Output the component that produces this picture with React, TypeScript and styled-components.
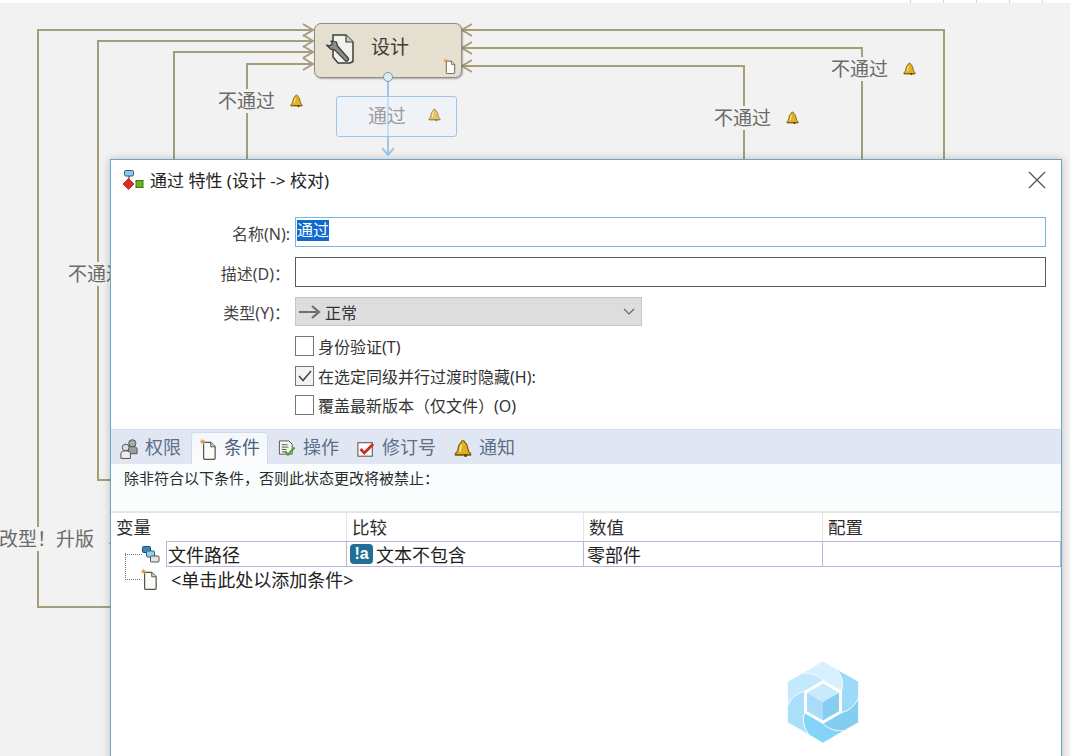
import styled, { createGlobalStyle } from 'styled-components';

const GlobalStyle = createGlobalStyle`
  html, body {
    margin: 0;
    padding: 0;
    background: #f2f2f2;
    overflow: hidden;
    font-family: "Noto Sans", "Noto Sans CJK SC", sans-serif;
  }
`;

const bellFill = '#e3b021';

function BellIcon({ size = 13 }: { size?: number }) {
  return (
    <svg width={size} height={size + 1} viewBox="0 0 14 15">
      <path d="M7 1.200c1 0 1.400.7 1.500 1.600C10.400 3.800 10.600 6 11 8.500c.2 1.400 1 2.300 2 3v1.300H1v-1.300c1-.7 1.800-1.600 2-3C3.400 6 3.600 3.800 5.500 2.800 5.600 1.900 6 1.200 7 1.200z" fill={bellFill} stroke="#7d6010" strokeWidth="1" />
      <path d="M5.800 4.500C5 6 5 8 4.600 10" stroke="#fff3b8" strokeWidth="1" fill="none" />
      <path d="M1.500 11.800h11v1H1.500z" fill="#7d6010" />
      <circle cx="9" cy="13" r="1.200" fill="#5a4708" />
    </svg>
  );
}

function DocIcon({ width = 16, height = 20, star = true }: { width?: number; height?: number; star?: boolean }) {
  return (
    <svg width={width} height={height} viewBox="0 0 16 20">
      <path d="M4 4h6.500L14.500 8v10.500c0 .6-.4 1-1 1H5c-.6 0-1-.4-1-1z" fill="#fbfbf8" stroke="#55554f" strokeWidth="1.100" />
      <path d="M10.500 4v4h4" fill="#d9d9d4" stroke="#55554f" strokeWidth="0.900" />
      {star && <path d="M3 .5l.6 1.700L5.300 1.400 4.400 3l1.600.8-1.800.3L3.800 6 3 4.300 1.400 5.500l.5-1.700L.3 3l1.800-.4L1.700 1l1.100.9z" fill="#e59a3c" />}
    </svg>
  );
}

function ToolDocIcon() {
  return (
    <svg width="30" height="32" viewBox="0 0 30 32">
      <path d="M8 2h13l7 7v19.500L25 30H13L8 24z" fill="#f1f1ee" stroke="#3e3e3a" strokeWidth="1.500" />
      <path d="M21 2v7h7" fill="#c9c9c5" stroke="#3e3e3a" strokeWidth="1.200" />
      <path d="M6 8l5.500 1 1 4 11 12.500c.8 1.200-1.600 3.400-2.800 2.600L9.600 16.800l-4-.6L1.500 12l3.400.8 2.400-1.800z" fill="#8d8d8a" stroke="#3a3a38" strokeWidth="1.200" strokeLinejoin="round" />
    </svg>
  );
}

function FlowIcon() {
  return (
    <svg width="22" height="20" viewBox="0 0 22 20">
      <rect x="2.500" y="0.500" width="9" height="5.500" rx="1.200" fill="#8fcbe6" stroke="#2d5f7e" />
      <path d="M7 6v4" stroke="#333" strokeWidth="1" />
      <path d="M6.500 8.500l5.500 5.500-5.500 5.500L1 14z" fill="#df2a22" stroke="#8c1410" strokeWidth="0.700" />
      <rect x="14" y="10.500" width="7" height="7" fill="#6db31e" stroke="#3e7510" />
    </svg>
  );
}

function PeopleIcon() {
  return (
    <svg width="18" height="22" viewBox="0 0 19 22">
      <circle cx="13" cy="5" r="3.800" fill="#a9a9a9" stroke="#4c4c4c" />
      <path d="M8.500 10.500c0-1.300 1.500-2 4.500-2s5 .7 5 2.200V16H8.500z" fill="#9d9d9d" stroke="#4c4c4c" />
      <circle cx="6" cy="9.500" r="3.600" fill="#dedede" stroke="#4c4c4c" />
      <path d="M1 15.500c0-1.700 2-2.500 5-2.500s5 .8 5 2.500V21H1z" fill="#ececec" stroke="#4c4c4c" />
    </svg>
  );
}

function ScriptIcon() {
  return (
    <svg width="18" height="19" viewBox="0 0 19 20">
      <path d="M1.500 2h10L15 5.500V16H1.500z" fill="#f5f5f2" stroke="#55554f" />
      <path d="M4 6h6M4 8.500h7M4 11h5M4 13.500h4" stroke="#55554f" strokeWidth="1" />
      <path d="M7.500 13l3 3.500 7-7.500" fill="none" stroke="#4aa52b" strokeWidth="2.400" />
    </svg>
  );
}

function CheckedBoxIcon() {
  return (
    <svg width="18" height="18" viewBox="0 0 20 20">
      <rect x="1" y="3" width="16" height="15" fill="#fbfbfb" stroke="#5c5c5c" strokeWidth="1.200" />
      <path d="M4 10l4 4.500L18 4.500" fill="none" stroke="#cf2b22" strokeWidth="3" />
    </svg>
  );
}

function VariableIcon() {
  return (
    <svg width="18" height="17" viewBox="0 0 18 17">
      <rect x="0.500" y="0.500" width="8" height="6" rx="1" fill="#3d87b8" stroke="#1d4a6c" />
      <rect x="4.500" y="5" width="8" height="6" rx="1" fill="#8fd0ee" stroke="#2a678c" />
      <rect x="8.500" y="10" width="8.500" height="6" rx="1" fill="#e4e4e0" stroke="#55554f" />
    </svg>
  );
}

function HexLogo() {
  const blades = [
    { angle: 0, fill: '#d8f0fd' },
    { angle: 60, fill: '#9bdbf9' },
    { angle: 120, fill: '#85cdf0' },
    { angle: 180, fill: '#84d4fa' },
    { angle: 240, fill: '#a9dff9' },
    { angle: 300, fill: '#c4e9fc' },
  ];
  return (
    <svg width="72" height="82" viewBox="-36 -41 72 82">
      {blades.map((b) => (
        <path
          key={b.angle}
          transform={`rotate(${b.angle})`}
          d="M0-41L14.400-32.500Q22-22 18.600-10.700L0-21.500Q-8-30-21-28.700Z"
          fill={b.fill}
          stroke="#fff"
          strokeWidth="0.600"
        />
      ))}
      <path d="M0-21.500L18.600-10.700V10.700L0 21.500-18.600 10.700V-10.700Z" fill="#fff" />
      <path d="M0-18.500L16-9.200 0 0-16-9.200Z" fill="#c7ebfd" />
      <path d="M-16-9.200L0 0V18.500L-16 9.200Z" fill="#a8dcf8" />
      <path d="M16-9.200L0 0V18.500L16 9.200Z" fill="#86cef0" />
    </svg>
  );
}

function Connectors() {
  const left = [
    '110,607 38,607 38,30 312,30',
    '110,480 98,480 98,41 312,41',
    '174,160 174,52 312,52',
    '247,160 247,64 312,64',
  ];
  const right = [
    '944,160 944,30 463,30',
    '862,160 862,48 463,48',
    '744,160 744,66 463,66',
  ];
  return (
    <Lines width="1070" height="756">
      {left.map((p) => <polyline key={p} points={p} />)}
      {right.map((p) => <polyline key={p} points={p} />)}
      {[30, 41, 52, 64].map((y) => (
        <polyline key={y} points={`303,${y - 6} 313,${y} 303,${y + 6}`} />
      ))}
      {[30, 48, 66].map((y) => (
        <polyline key={y} points={`472,${y - 6} 462,${y} 472,${y + 6}`} />
      ))}
    </Lines>
  );
}

const tabs = [
  { label: '权限', icon: <PeopleIcon /> },
  { label: '条件', icon: <DocIcon width={18} height={22} />, active: true },
  { label: '操作', icon: <ScriptIcon /> },
  { label: '修订号', icon: <CheckedBoxIcon /> },
  { label: '通知', icon: <BellIcon size={18} /> },
];

export default function App() {
  return (
    <Canvas>
      <GlobalStyle />
      <TopStrip>
        <RulerCell /><RulerCell /><RulerCell /><RulerCell /><RulerCell />
      </TopStrip>

      <Connectors />

      <FlowLabel $x={218} $y={89}>不通过<BellIcon /></FlowLabel>
      <FlowLabel $x={714} $y={106}>不通过<BellIcon /></FlowLabel>
      <FlowLabel $x={831} $y={57}>不通过<BellIcon /></FlowLabel>
      <FlowLabel $x={68} $y={262}>不通过<BellIcon /></FlowLabel>
      <FlowLabel $x={-1} $y={527}>改型！升版<BellIcon /></FlowLabel>

      <StateNode>
        <ToolDocIcon />
        <NodeName>设计</NodeName>
        <NodeBadge><DocIcon width={13} height={16} /></NodeBadge>
      </StateNode>

      <SelectedLink>
        <svg width="12" height="84" viewBox="0 0 12 84">
          <path d="M6 5V83" stroke="#9cc6ea" strokeWidth="2" />
          <path d="M0 76l6 7 6-7" stroke="#9cc6ea" strokeWidth="2" fill="none" />
          <circle cx="6" cy="5" r="4.500" fill="#d8ecf6" stroke="#7a9ab0" />
        </svg>
      </SelectedLink>
      <SelectedLabel>通过<BellIcon /></SelectedLabel>

      <Dialog>
        <TitleBar>
          <FlowIcon />
          <Title>通过 特性 (设计 -&gt; 校对)</Title>
          <CloseButton>
            <svg width="18" height="18" viewBox="0 0 18 18">
              <path d="M1 1l16 16M17 1L1 17" stroke="#555" strokeWidth="1.300" />
            </svg>
          </CloseButton>
        </TitleBar>

        <Form>
          <FieldLabel>名称(N):</FieldLabel>
          <TextField $focused><Selection>通过</Selection></TextField>
          <FieldLabel>描述(D)：</FieldLabel>
          <TextField />
          <FieldLabel>类型(Y)：</FieldLabel>
          <SelectBox>
            <svg width="22" height="14" viewBox="0 0 22 14">
              <path d="M0 7h19M13 1l7 6-7 6" stroke="#6f6f6f" strokeWidth="2.200" fill="none" />
            </svg>
            <SelectText>正常</SelectText>
            <svg width="12" height="7" viewBox="0 0 12 7">
              <path d="M1 1l5 5 5-5" stroke="#666" strokeWidth="1.200" fill="none" />
            </svg>
          </SelectBox>
          <CheckRows>
            <CheckRow><CheckBox />身份验证(T)</CheckRow>
            <CheckRow>
              <CheckBox $checked>
                <svg width="14" height="12" viewBox="0 0 14 12">
                  <path d="M1 6l4 4.500L13 1" stroke="#444" strokeWidth="1.500" fill="none" />
                </svg>
              </CheckBox>
              在选定同级并行过渡时隐藏(H):
            </CheckRow>
            <CheckRow><CheckBox />覆盖最新版本（仅文件）(O)</CheckRow>
          </CheckRows>
        </Form>

        <TabBar>
          {tabs.map((t) => (
            <Tab key={t.label} $active={t.active}>
              {t.icon}
              <TabText>{t.label}</TabText>
            </Tab>
          ))}
        </TabBar>

        <InfoPanel>除非符合以下条件，否则此状态更改将被禁止：</InfoPanel>

        <HeaderRow>
          <HeaderCell>变量</HeaderCell>
          <HeaderCell>比较</HeaderCell>
          <HeaderCell>数值</HeaderCell>
          <HeaderCell>配置</HeaderCell>
        </HeaderRow>

        <ConditionRow>
          <TreeCell>
            <TreeElbow $tall />
            <VariableIcon />
            <CellBox>文件路径</CellBox>
          </TreeCell>
          <CellBox>
            <CompareBadge>!a</CompareBadge>
            文本不包含
          </CellBox>
          <CellBox>零部件</CellBox>
          <CellBox />
        </ConditionRow>

        <AddRow>
          <TreeElbow />
          <DocIcon width={18} height={22} />
          <AddText>&lt;单击此处以添加条件&gt;</AddText>
        </AddRow>
      </Dialog>

      <Watermark><HexLogo /></Watermark>
    </Canvas>
  );
}

const Canvas = styled.div`
  position: relative;
  width: 1070px;
  height: 756px;
  overflow: hidden;
  background: #f2f2f2;
`;

const TopStrip = styled.div`
  display: flex;
  height: 3px;
  padding-left: 910px;
  background: #fff;
`;

const RulerCell = styled.div`
  flex: none;
  width: 32px;
  border-left: 1px solid #d8d8d8;
`;

const Lines = styled.svg`
  position: absolute;
  left: 0;
  top: 0;
  fill: none;
  stroke: #a59e7c;
  stroke-width: 2;
`;

const FlowLabel = styled.div<{ $x: number; $y: number }>`
  position: absolute;
  left: ${(p) => p.$x}px;
  top: ${(p) => p.$y}px;
  display: flex;
  align-items: center;
  gap: 15px;
  height: 24px;
  font-size: 19px;
  line-height: 24px;
  color: #6a6a66;
  background: #f2f2f2;
  white-space: nowrap;
`;

const StateNode = styled.div`
  position: absolute;
  left: 314px;
  top: 23px;
  box-sizing: border-box;
  width: 148px;
  height: 55px;
  display: flex;
  align-items: center;
  padding: 0 0 4px 10px;
  gap: 16px;
  background: #e4dfce;
  border: 1px solid #8f8d82;
  border-radius: 7px;
  box-shadow: 1px 1px 2px rgba(0, 0, 0, 0.3);
`;

const NodeName = styled.span`
  margin-bottom: 5px;
  font-size: 19px;
  color: #3c3c38;
`;

const NodeBadge = styled.span`
  position: absolute;
  right: 5px;
  bottom: 3px;
  display: flex;
`;

const SelectedLink = styled.div`
  position: absolute;
  left: 382px;
  top: 72px;
  display: flex;
`;

const SelectedLabel = styled.div`
  position: absolute;
  left: 336px;
  top: 96px;
  box-sizing: border-box;
  width: 121px;
  height: 41px;
  display: flex;
  align-items: center;
  padding: 0 0 4px 31px;
  gap: 22px;
  font-size: 19px;
  color: #9c9c9c;
  background: rgba(236, 244, 252, 0.55);
  border: 1px solid #a3c5e4;
  border-radius: 3px;

  svg {
    opacity: 0.7;
  }
`;

const Dialog = styled.section`
  position: absolute;
  left: 110px;
  top: 159px;
  box-sizing: border-box;
  width: 952px;
  height: 640px;
  display: flex;
  flex-direction: column;
  background: #fff;
  border: 1px solid #6ba5cc;
  box-shadow: 0 0 8px rgba(0, 0, 0, 0.22);
`;

const TitleBar = styled.header`
  display: flex;
  align-items: center;
  box-sizing: border-box;
  height: 41px;
  padding: 0 15px 2px 11px;
  gap: 6px;
`;

const Title = styled.h1`
  flex: 1;
  margin: 0;
  font-size: 17px;
  font-weight: 400;
  color: #222;
`;

const CloseButton = styled.div`
  display: flex;
`;

const Form = styled.div`
  display: grid;
  grid-template-columns: 179px 751px;
  column-gap: 5px;
  row-gap: 10px;
  align-items: center;
  padding-top: 16px;
`;

const FieldLabel = styled.label`
  padding-top: 3px;
  font-size: 16px;
  line-height: 22px;
  color: #444;
  text-align: right;
`;

const TextField = styled.div<{ $focused?: boolean }>`
  box-sizing: border-box;
  height: 30px;
  padding: 0 1px;
  font-size: 16px;
  line-height: 24px;
  border: 1px solid ${(p) => (p.$focused ? '#7cb4dc' : '#5a5a5a')};
`;

const Selection = styled.span`
  display: inline-block;
  height: 21px;
  line-height: 20px;
  color: #fff;
  background: #0f6ad0;
`;

const SelectBox = styled.div`
  box-sizing: border-box;
  width: 347px;
  height: 29px;
  display: flex;
  align-items: center;
  padding: 0 6px 0 3px;
  background: #dddddd;
  border: 1px solid #c6c6c6;
`;

const SelectText = styled.span`
  flex: 1;
  margin-left: 4px;
  font-size: 16px;
  color: #333;
`;

const CheckRows = styled.div`
  grid-column: 2;
  display: flex;
  flex-direction: column;
  gap: 9.500px;
`;

const CheckRow = styled.div`
  display: flex;
  align-items: center;
  gap: 4px;
  height: 20px;
  font-size: 16px;
  color: #333;
  white-space: nowrap;
`;

const CheckBox = styled.span<{ $checked?: boolean }>`
  box-sizing: border-box;
  width: 19px;
  height: 20px;
  display: flex;
  align-items: center;
  justify-content: center;
  background: ${(p) => (p.$checked ? '#f3f3f3' : '#fff')};
  border: 1px solid #767676;
`;

const TabBar = styled.nav`
  display: flex;
  align-items: flex-end;
  gap: 4px;
  height: 34px;
  margin-top: 14px;
  padding-left: 2px;
  background: #e0e7f2;
  border-top: 1px solid #d3dbe8;
`;

const Tab = styled.div<{ $active?: boolean }>`
  display: flex;
  align-items: center;
  gap: 7px;
  height: 31px;
  padding: 0 7px;
  font-size: 18px;
  color: ${(p) => (p.$active ? '#4f5f78' : '#5c6e8a')};
  background: ${(p) => (p.$active ? 'linear-gradient(#f4f7fb, #fbfdfe)' : 'transparent')};
  border-radius: 3px 3px 0 0;
  box-shadow: ${(p) => (p.$active ? '0 0 0 1px #d3dbe8' : 'none')};
`;

const TabText = styled.span`
  margin-bottom: 6px;
`;

const InfoPanel = styled.div`
  box-sizing: border-box;
  height: 49px;
  padding: 3px 13px 0;
  font-size: 15px;
  line-height: 22px;
  color: #2b2b2b;
  background: #fafdfe;
  border-bottom: 2px solid #e4e4e4;
`;

const HeaderRow = styled.div`
  display: grid;
  grid-template-columns: 236px 237px 239px 238px;
  height: 28px;
`;

const HeaderCell = styled.div`
  padding-left: 5px;
  font-size: 17.500px;
  line-height: 28px;
  color: #2e2e2e;
  border-right: 1px solid #e6e6e6;
`;

const ConditionRow = styled.div`
  display: grid;
  grid-template-columns: 236px 237px 239px 238px;
  height: 26px;
`;

const TreeCell = styled.div`
  position: relative;
  display: flex;
  align-items: center;
  padding-left: 32px;
  gap: 6px;
`;

const TreeElbow = styled.span<{ $tall?: boolean }>`
  width: ${(p) => (p.$tall ? '17px' : '14px')};
  height: ${(p) => (p.$tall ? '0' : '26px')};
  margin-left: ${(p) => (p.$tall ? '-18px' : '0')};
  margin-right: ${(p) => (p.$tall ? '-6px' : '0')};
  margin-top: ${(p) => (p.$tall ? '0' : '-26px')};
  border-left: ${(p) => (p.$tall ? 'none' : '1px dotted #777')};
  border-top: ${(p) => (p.$tall ? '1px dotted #777' : 'none')};
  border-bottom: ${(p) => (p.$tall ? 'none' : '1px dotted #777')};
`;

const CellBox = styled.div`
  box-sizing: border-box;
  flex: 1;
  height: 26px;
  display: flex;
  align-items: center;
  gap: 3px;
  padding-left: 3px;
  font-size: 18px;
  color: #1e1e1e;
  border: 1px solid #b9b5d8;
  border-left-width: 0;
  ${TreeCell} > & {
    border-left-width: 1px;
    padding-left: 1px;
  }
`;

const CompareBadge = styled.span`
  width: 23px;
  height: 20px;
  display: flex;
  align-items: center;
  justify-content: center;
  font-family: "Liberation Sans", sans-serif;
  font-size: 16px;
  font-weight: 700;
  color: #fff;
  background: #1f6f96;
  border-radius: 4px;
`;

const AddRow = styled.div`
  display: flex;
  align-items: center;
  height: 24px;
  padding-left: 14px;
`;

const AddText = styled.span`
  margin-left: 13px;
  font-size: 18px;
  color: #222;
`;

const Watermark = styled.div`
  position: absolute;
  left: 787px;
  top: 661px;
  display: flex;
`;
